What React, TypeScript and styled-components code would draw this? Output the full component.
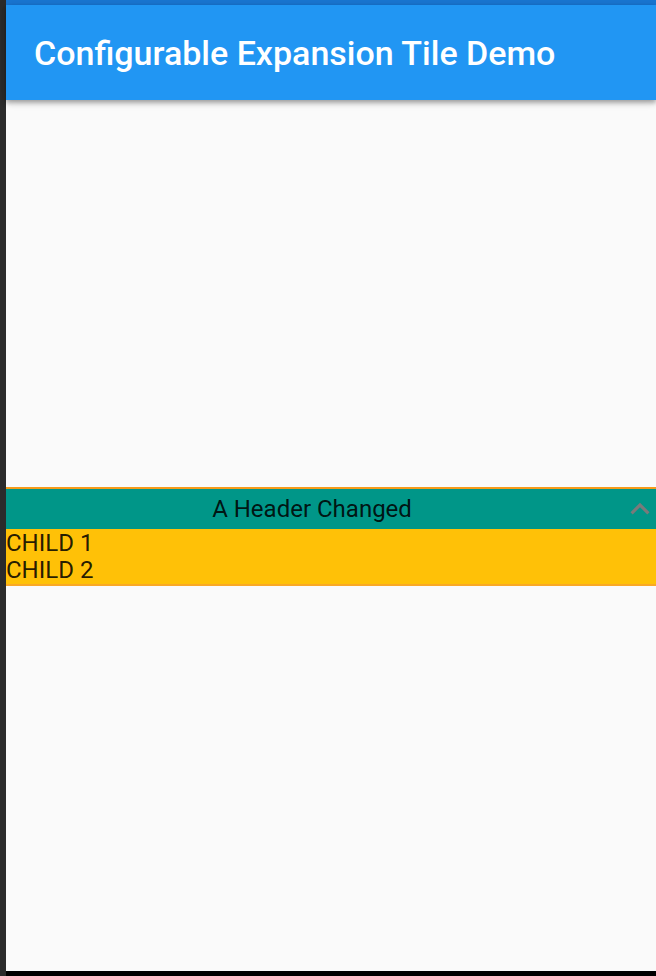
import React from "react";
import styled, { createGlobalStyle } from "styled-components";

const Global = createGlobalStyle`
  html, body { margin: 0; padding: 0; background: #000; }
  body { font-family: Roboto, "Noto Sans", sans-serif; }
  #root { width: 656px; height: 976px; }
`;

const Device = styled.div`
  width: 656px;
  height: 976px;
  display: flex;
  background: #000;
  overflow: hidden;
`;

const Bezel = styled.div`
  width: 6px;
  flex: none;
  background: #2b2b2b;
`;

const Column = styled.div`
  flex: 1;
  display: flex;
  flex-direction: column;
`;

const Screen = styled.div`
  flex: 1;
  display: flex;
  flex-direction: column;
  height: 971px;
  background: #fafafa;
`;

const StatusBar = styled.div`
  height: 5px;
  flex: none;
  background: #1976d2;
`;

const AppBar = styled.header`
  height: 95px;
  flex: none;
  background: #2196f3;
  display: flex;
  align-items: center;
  padding-left: 28px;
  box-shadow: 0 2px 4px rgba(0, 0, 0, 0.2), 0 4px 5px rgba(0, 0, 0, 0.14), 0 1px 10px rgba(0, 0, 0, 0.12);
  position: relative;
  z-index: 1;
`;

const Title = styled.h1`
  margin: 0;
  color: #fff;
  font-family: Roboto, sans-serif;
  font-weight: 500;
  font-size: 34px;
`;

const Body = styled.main`
  flex: 1;
  display: flex;
  flex-direction: column;
  justify-content: center;
  padding-top: 1px;
`;

const Tile = styled.section`
  border-top: 2px solid #f59b1a;
  border-bottom: 2px solid #f9a825;
  background: #ffc107;
`;

const TileHeader = styled.div`
  height: 40px;
  background: #009688;
  display: flex;
  align-items: center;
  justify-content: center;
  position: relative;
`;

const HeaderText = styled.span`
  font-family: Roboto, sans-serif;
  font-size: 24px;
  color: rgba(0, 0, 0, 0.87);
  margin-right: 38px;
`;

const Chevron = styled.svg`
  position: absolute;
  right: -3px;
  top: 1px;
`;

const Children = styled.div`
  display: flex;
  flex-direction: column;
  padding: 1px 0 0 0;
`;

const Child = styled.div`
  font-family: Roboto, sans-serif;
  font-size: 24px;
  line-height: 27px;
  color: rgba(0, 0, 0, 0.87);
`;

const BottomBar = styled.div`
  height: 5px;
  background: #000;
`;

export default function App() {
  return (
    <>
      <Global />
      <Device>
        <Bezel />
        <Column>
          <Screen>
            <StatusBar />
            <AppBar>
              <Title>Configurable Expansion Tile Demo</Title>
            </AppBar>
            <Body>
              <Tile>
                <TileHeader>
                  <HeaderText>A Header Changed</HeaderText>
                  <Chevron width="38" height="38" viewBox="0 0 24 24">
                    <path d="M7.41 15.41L12 10.83l4.59 4.58L18 14l-6-6-6 6z" fill="#7a7a7a" />
                  </Chevron>
                </TileHeader>
                <Children>
                  <Child>CHILD 1</Child>
                  <Child>CHILD 2</Child>
                </Children>
              </Tile>
            </Body>
          </Screen>
          <BottomBar />
        </Column>
      </Device>
    </>
  );
}
